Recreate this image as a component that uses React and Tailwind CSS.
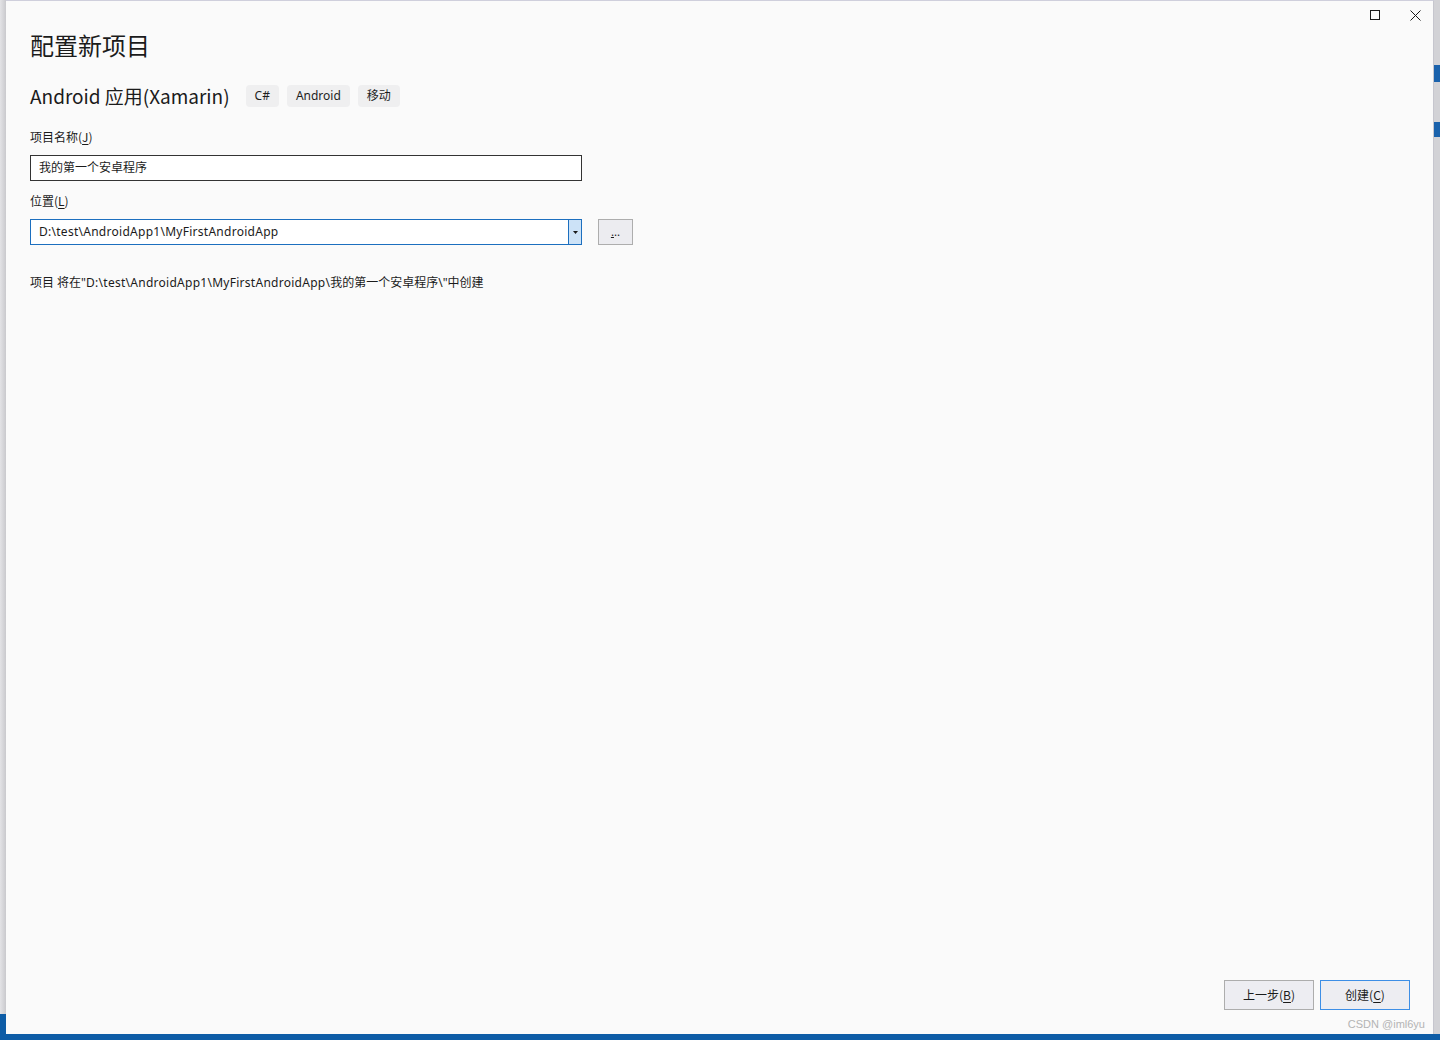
import React from 'react';

const font = { fontFamily: '"Noto Sans CJK SC", "Noto Sans", sans-serif' };
const small = { fontFamily: '"Noto Sans", "Noto Sans CJK SC", sans-serif' };

const Tag = ({ children }) => (
  <span className="h-[22px] px-[9px] flex items-center rounded-[4px] bg-[#efeff0] text-[12px] text-[#1e1e1e]">
    {children}
  </span>
);

const Key = ({ k }) => (
  <>
    (<span className="underline underline-offset-2">{k}</span>)
  </>
);

const App = () => {
  return (
    <div className="w-[1440px] h-[1040px] flex flex-col bg-[#0d5ca6] overflow-hidden" style={font}>
      <div className="flex h-[1034px]">
        {/* left backdrop */}
        <div className="w-[6px] flex flex-col bg-[#d6d6d8]">
          <div className="h-[1014px] bg-gradient-to-r from-[#e3e3e6] to-[#c9c9cd]" />
          <div className="flex-1 bg-[#0d5ca6]" />
        </div>

        {/* dialog */}
        <div className="flex-1 flex flex-col bg-[#fafafa] border-t border-[#cfcfdc] border-r border-r-[#c6c6ce] relative">
          <div className="absolute top-[6px] right-[48px] w-[20px] h-[16px] flex items-center justify-center">
            <div className="w-[10px] h-[10px] border border-[#1a1a1a]" />
          </div>
          <div className="absolute top-[6px] right-[8px] w-[20px] h-[16px] flex items-center justify-center">
            <svg width="11" height="11" viewBox="0 0 11 11">
              <path d="M0.5 0.5 L10.5 10.5 M10.5 0.5 L0.5 10.5" stroke="#1a1a1a" strokeWidth="1" />
            </svg>
          </div>

          <div className="pl-[24px] pt-[27px] flex flex-col">
            <h1 className="text-[24px] leading-[34px] text-[#1b1b1b]">配置新项目</h1>

            <div className="mt-[20px] flex items-center h-[28px]">
              <span className="text-[19px] text-[#1b1b1b] leading-[28px]">Android 应用(Xamarin)</span>
              <div className="ml-[16px] flex gap-[8px]" style={small}>
                <Tag>C#</Tag>
                <Tag>Android</Tag>
                <Tag>移动</Tag>
              </div>
            </div>

            <label className="mt-[18px] text-[12px] leading-[17px] text-[#1b1b1b]">
              项目名称<Key k="J" />
            </label>
            <div className="mt-[10px] w-[552px] h-[26px] border border-[#333333] bg-white flex items-center pl-[8px] text-[12px] text-[#1b1b1b]" style={small}>
              我的第一个安卓程序
            </div>

            <label className="mt-[11px] text-[12px] leading-[17px] text-[#1b1b1b]">
              位置<Key k="L" />
            </label>
            <div className="mt-[10px] flex items-center">
              <div className="w-[552px] h-[26px] border border-[#1c6fbf] bg-white flex">
                <div className="flex-1 flex items-center pl-[8px] text-[12px] text-[#1b1b1b] tracking-[0.27px]" style={small}>
                  D:\test\AndroidApp1\MyFirstAndroidApp
                </div>
                <div className="w-[13px] bg-[#cce2f7] border-l border-[#1c6fbf] flex items-center justify-center">
                  <svg width="5" height="3" viewBox="0 0 5 3">
                    <path d="M0 0 H5 L2.5 3 Z" fill="#1a1a1a" />
                  </svg>
                </div>
              </div>
              <button className="ml-[16px] w-[35px] h-[26px] border border-[#adadad] bg-[#ececf0] text-[11px] leading-none text-[#1b1b1b] flex items-end justify-center pb-[7px]">
                <span className="underline">.</span>..
              </button>
            </div>

            <p className="mt-[29px] text-[12px] leading-[17px] text-[#1b1b1b]" style={small}>
              项目 将在"<span className="tracking-[0.27px]">D:\test\AndroidApp1\MyFirstAndroidApp\</span>我的第一个安卓程序\"中创建
            </p>
          </div>

          <div className="mt-auto flex justify-end gap-[6px] pr-[23px] pb-[24px]">
            <button className="w-[90px] h-[30px] border border-[#adadad] bg-[#ededf2] text-[12px] text-[#1b1b1b]">
              上一步<Key k="B" />
            </button>
            <button className="w-[90px] h-[30px] border border-[#3d8ee6] bg-[#ededf2] text-[12px] text-[#1b1b1b]">
              创建<Key k="C" />
            </button>
          </div>
          <div className="absolute right-[8px] bottom-[2px] text-[11px] text-[#b4b4b4]" style={{ fontFamily: '"Liberation Sans", Arial, sans-serif' }}>
            CSDN @iml6yu
          </div>
        </div>

        {/* right backdrop */}
        <div className="w-[6px] flex flex-col bg-[#d2d2d6]">
          <div className="h-[65px]" />
          <div className="h-[17px] bg-[#1a62ac]" />
          <div className="h-[40px]" />
          <div className="h-[15px] bg-[#1a62ac]" />
          <div className="flex-1" />
        </div>
      </div>
      <div className="h-[6px] bg-[#0d5ca6]" />
    </div>
  );
};

export default App;
